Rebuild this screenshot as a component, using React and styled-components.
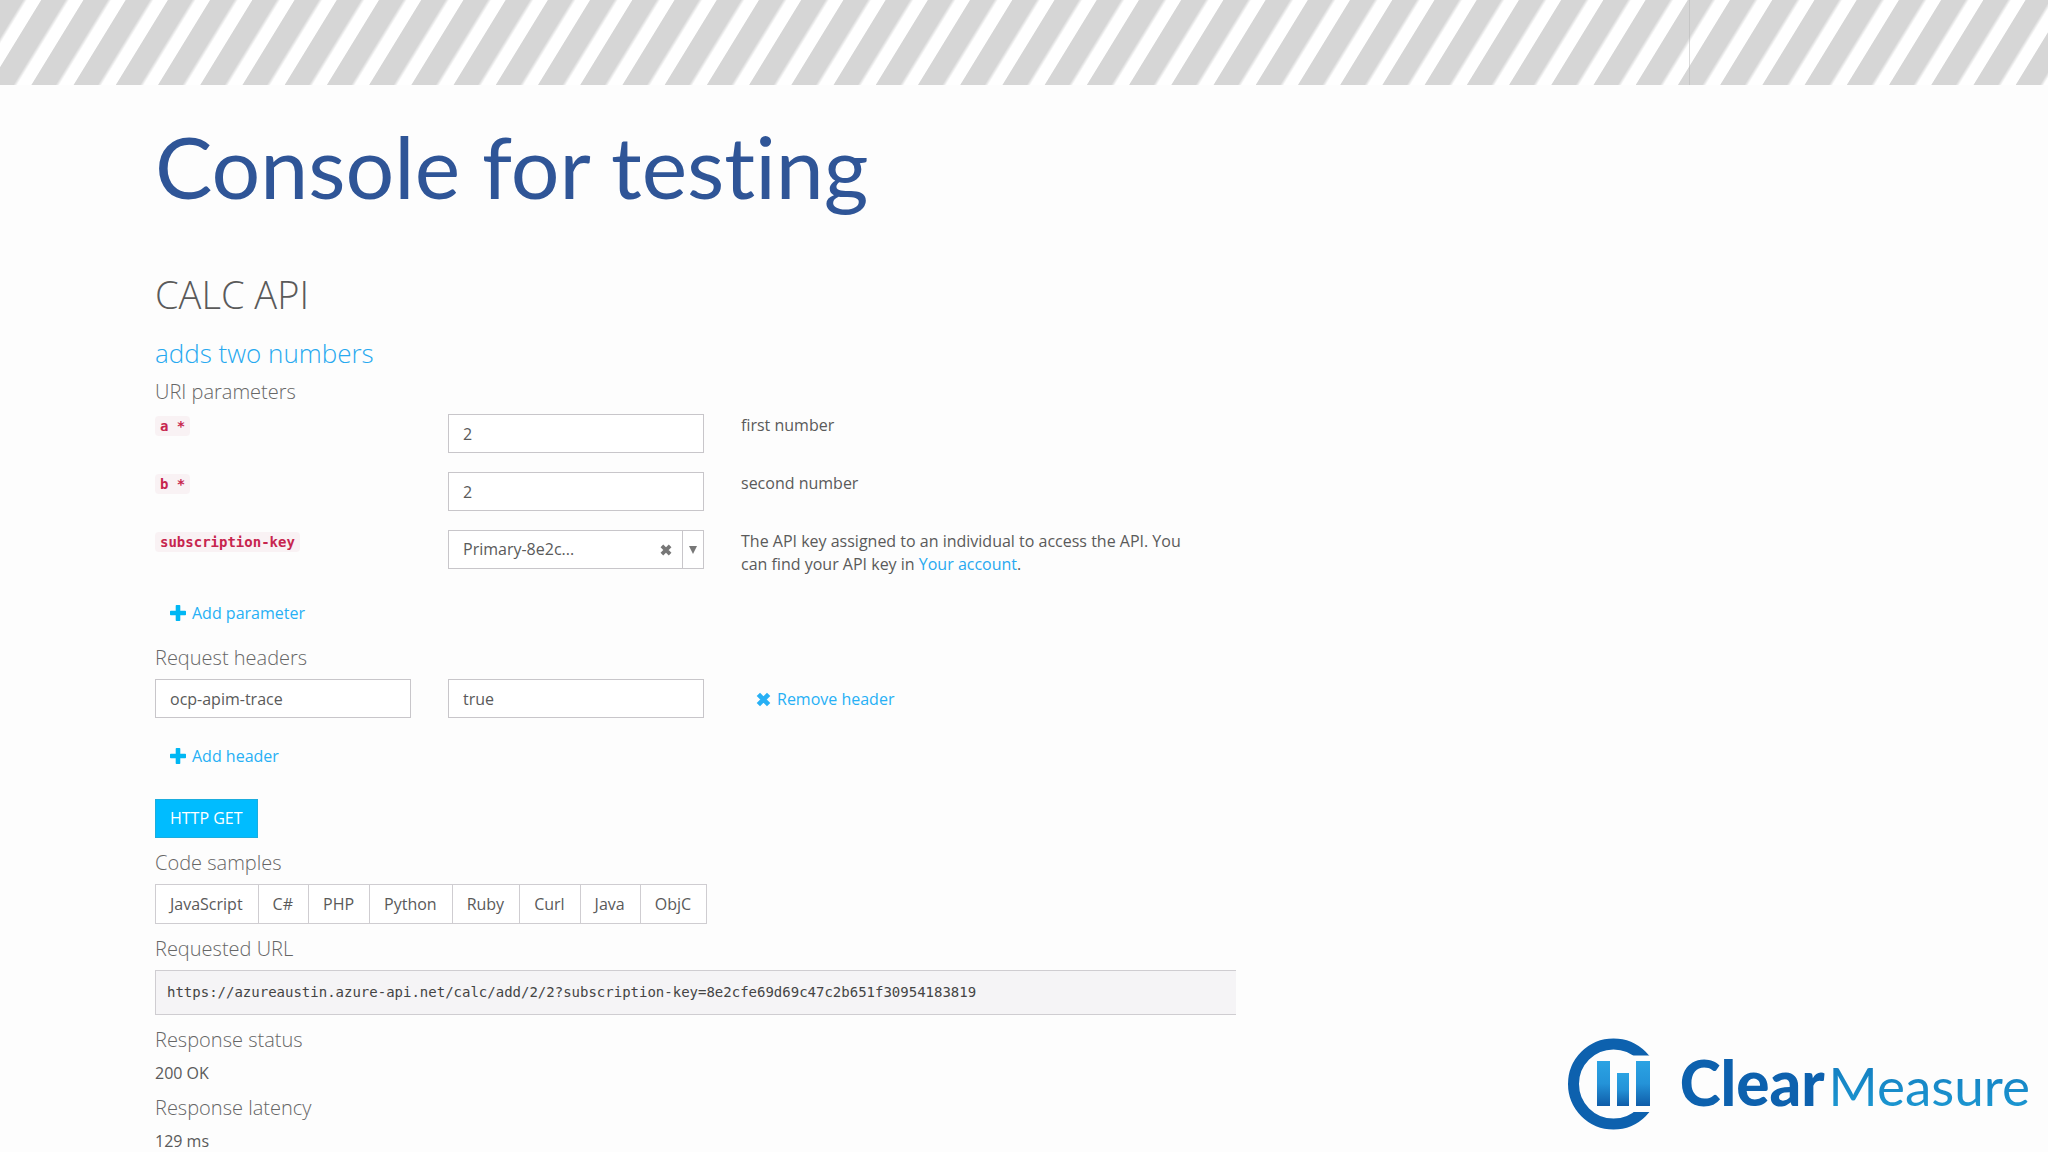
import { useState } from "react";
import styled, { createGlobalStyle } from "styled-components";

const GlobalStyle = createGlobalStyle`
   * {
      box-sizing: border-box;
   }
   body {
      margin: 0;
      background-color: #fdfdfd;
      color: #5a5a5a;
      font-family: "Open Sans", "Noto Sans", sans-serif;
      font-size: 16px;
      line-height: 23px;
   }
   button, input, select {
      font: inherit;
      color: inherit;
      margin: 0;
   }
`;

const Slide = styled.div`
   height: 100vh;
   display: flex;
   flex-direction: column;
   overflow: hidden;
`;

const Banner = styled.svg`
   display: block;
   flex: none;
   width: 100%;
   height: 85px;
`;

const Body = styled.div`
   flex: 1;
   min-height: 0;
   display: flex;
   justify-content: space-between;
   padding: 31px 18px 0 155px;
`;

const Main = styled.main`
   flex: 0 1 1081px;
   min-width: 0;
`;

const Title = styled.h1`
   margin: 0 0 52px;
   color: #2f5597;
   font-family: Lato, sans-serif;
   font-size: 86px;
   font-weight: 400;
   font-variant-ligatures: none;
   line-height: 100px;
   white-space: nowrap;
`;

const ApiName = styled.h2`
   margin: 0 0 14px;
   font-size: 38px;
   font-weight: 300;
   line-height: 52px;
`;

const Operation = styled.h3`
   margin: 0 0 6px;
   color: #27a9f0;
   font-size: 26px;
   font-weight: 300;
   line-height: 38px;
`;

const Heading = styled.h4`
   margin: 11px 0 7px;
   color: #666;
   font-size: 20px;
   font-weight: 300;
   line-height: 28px;

   ${Operation} + & {
      margin: 0 0 8px;
   }
`;

const ParamList = styled.div`
   display: flex;
   flex-direction: column;
   gap: 19px;
   margin-bottom: 17px;
`;

const Row = styled.div`
   display: grid;
   grid-template-columns: 256px 256px 1fr;
   column-gap: 37px;
   align-items: start;
`;

const HeaderRow = styled(Row)`
   margin-bottom: 17px;
`;

const Code = styled.code`
   padding: 2px 5px;
   border-radius: 4px;
   background-color: #f9f2f4;
   color: #c7254e;
   font-family: "DejaVu Sans Mono", monospace;
   font-size: 14px;
   font-weight: 700;
   white-space: pre;
`;

const Input = styled.input`
   width: 100%;
   height: 39px;
   padding: 0 14px;
   border: 1px solid #c8c6ca;
   border-radius: 0;
   background-color: #fff;
`;

const SelectBox = styled.div`
   display: flex;
   height: 39px;
   border: 1px solid #c8c6ca;
   background-color: #fff;
`;

const Select = styled.select`
   flex: 1;
   min-width: 0;
   padding: 0 14px;
   border: 0;
   background: none;
   appearance: none;
`;

const ClearBtn = styled.button`
   display: flex;
   align-items: center;
   padding: 0 10px;
   border: 0;
   background: none;
   color: #777;
`;

const Arrow = styled.span`
   display: flex;
   align-items: center;
   padding: 0 6px;
   border-left: 1px solid #c8c6ca;
   color: #777;
`;

const Description = styled.p`
   margin: 0;
   max-width: 460px;
`;

const Link = styled.a`
   color: #27a9f0;
   text-decoration: none;
`;

const LinkBtn = styled.button`
   display: flex;
   align-items: center;
   gap: 6px;
   height: 40px;
   padding: 0 15px;
   border: 0;
   background: none;
   color: #27b0f5;
`;

const SendBtn = styled.button`
   display: block;
   height: 39px;
   margin-top: 23px;
   padding: 0 14px;
   border: 1px solid #1badde;
   background-color: #00bcff;
   color: #fff;
`;

const Tabs = styled.div`
   display: flex;
   width: max-content;
   border: 1px solid #cfcdd1;
   background-color: #fff;
`;

const Tab = styled.button`
   height: 38px;
   padding: 0 15px 0 14px;
   border: 0;
   background: none;

   & + & {
      border-left: 1px solid #cfcdd1;
   }
`;

const Url = styled.pre`
   margin: 0;
   padding: 11px;
   border: 1px solid #cfcdd1;
   border-right: 0;
   background-color: #f5f4f6;
   color: #444;
   font-family: "DejaVu Sans Mono", monospace;
   font-size: 14px;
   line-height: 21px;
   overflow: hidden;
`;

const Value = styled.p`
   margin: 9px 0 0;
   line-height: 20px;
`;

const Brand = styled.div`
   flex: none;
   align-self: flex-end;
   display: flex;
   align-items: center;
   margin-bottom: 22px;
`;

const BrandMark = styled.svg`
   width: 84px;
   height: 92px;
   margin-right: 28px;
`;

const BrandName = styled.span`
   color: #0d61ae;
   font-family: Lato, sans-serif;
   font-size: 62px;
   font-weight: 900;
   line-height: 64px;
`;

const BrandSuffix = styled.span`
   margin-left: 4px;
   background: linear-gradient(#1279bd, #1d9bd4);
   background-clip: text;
   color: transparent;
   font-size: 53px;
   font-weight: 400;
`;

const samples = ["JavaScript", "C#", "PHP", "Python", "Ruby", "Curl", "Java", "ObjC"];

function Stripes() {
   return (
      <Banner aria-hidden="true">
         <defs>
            <linearGradient id="edge">
               <stop offset="0" stopColor="#d6d6d6" />
               <stop offset="0.86" stopColor="#d6d6d6" />
               <stop offset="1" stopColor="#fdfdfd" />
            </linearGradient>
            <pattern
               id="stripes"
               x="41.2"
               width="42.22"
               height="200"
               patternUnits="userSpaceOnUse"
               patternTransform="skewX(-31.5)"
            >
               <rect width="28" height="200" fill="url(#edge)" />
            </pattern>
         </defs>
         <rect width="100%" height="85" fill="#fff" />
         <rect width="100%" height="85" fill="url(#stripes)" />
         <rect x="1689" width="1" height="85" fill="#b5b5b5" opacity="0.5" />
      </Banner>
   );
}

function PlusIcon() {
   return (
      <svg width="16" height="16" viewBox="0 0 16 16" aria-hidden="true">
         <path
            d="M6.5 0h3q.8 0 .8.8v4.9h4.9q.8 0 .8.8v3q0 .8-.8.8h-4.9v4.9q0 .8-.8.8h-3q-.8 0-.8-.8v-4.9H.8q-.8 0-.8-.8v-3q0-.8.8-.8h4.9V.8q0-.8.8-.8z"
            fill="#00b7f4"
         />
      </svg>
   );
}

function CrossIcon({ size }) {
   return (
      <svg width={size} height={size} viewBox="0 0 14 14" aria-hidden="true">
         <path d="M2.2 2.2l9.6 9.6M11.8 2.2l-9.6 9.6" stroke="currentColor" strokeWidth="4.4" />
      </svg>
   );
}

function Logo() {
   return (
      <Brand>
         <BrandMark viewBox="0 0 84 92" aria-hidden="true">
            <defs>
               <linearGradient id="bar" x2="0" y2="1">
                  <stop offset="0" stopColor="#2ba3e3" />
                  <stop offset="0.5" stopColor="#2493d8" />
                  <stop offset="1" stopColor="#0f5ca8" />
               </linearGradient>
               <clipPath id="opening">
                  <path d="M0 0h84v17.5H64L46 46l18 28h20v18H0z" />
               </clipPath>
            </defs>
            <circle
               cx="45.5"
               cy="46"
               r="40"
               fill="none"
               stroke="#0d61ae"
               strokeWidth="11"
               clipPath="url(#opening)"
            />
            <rect x="29" y="23" width="13" height="45" fill="url(#bar)" />
            <rect x="49" y="35" width="12" height="33" fill="url(#bar)" />
            <rect x="68" y="23" width="14" height="45" fill="url(#bar)" />
         </BrandMark>
         <BrandName>
            Clear<BrandSuffix>Measure</BrandSuffix>
         </BrandName>
      </Brand>
   );
}

export default function App() {
   const [params, setParams] = useState({ a: "2", b: "2" });
   const [header, setHeader] = useState({ name: "ocp-apim-trace", value: "true" });

   function onChangeParam(e) {
      setParams({ ...params, [e.target.id]: e.target.value });
   }

   function onChangeHeader(e) {
      setHeader({ ...header, [e.target.name]: e.target.value });
   }

   return (
      <>
         <GlobalStyle />
         <Slide>
            <Stripes />
            <Body>
               <Main>
                  <Title>Console for testing</Title>
                  <ApiName>CALC API</ApiName>
                  <Operation>adds two numbers</Operation>
                  <Heading>URI parameters</Heading>
                  <ParamList>
                     <Row>
                        <label htmlFor="a">
                           <Code>a *</Code>
                        </label>
                        <Input id="a" value={params.a} onChange={onChangeParam} />
                        <Description>first number</Description>
                     </Row>
                     <Row>
                        <label htmlFor="b">
                           <Code>b *</Code>
                        </label>
                        <Input id="b" value={params.b} onChange={onChangeParam} />
                        <Description>second number</Description>
                     </Row>
                     <Row>
                        <label htmlFor="key">
                           <Code>subscription-key</Code>
                        </label>
                        <SelectBox>
                           <Select id="key">
                              <option>Primary-8e2c...</option>
                           </Select>
                           <ClearBtn type="button" aria-label="Clear">
                              <CrossIcon size={12} />
                           </ClearBtn>
                           <Arrow>
                              <svg width="8" height="8" viewBox="0 0 8 8" aria-hidden="true">
                                 <path d="M0 0h8L4 8z" fill="currentColor" />
                              </svg>
                           </Arrow>
                        </SelectBox>
                        <Description>
                           The API key assigned to an individual to access the API. You can find your API key in{" "}
                           <Link href="#account">Your account</Link>.
                        </Description>
                     </Row>
                  </ParamList>
                  <LinkBtn type="button">
                     <PlusIcon />
                     Add parameter
                  </LinkBtn>
                  <Heading>Request headers</Heading>
                  <HeaderRow>
                     <Input name="name" aria-label="Header name" value={header.name} onChange={onChangeHeader} />
                     <Input name="value" aria-label="Header value" value={header.value} onChange={onChangeHeader} />
                     <LinkBtn type="button">
                        <CrossIcon size={15} />
                        Remove header
                     </LinkBtn>
                  </HeaderRow>
                  <LinkBtn type="button">
                     <PlusIcon />
                     Add header
                  </LinkBtn>
                  <SendBtn type="button">HTTP GET</SendBtn>
                  <Heading>Code samples</Heading>
                  <Tabs>
                     {samples.map((name) => (
                        <Tab key={name} type="button">
                           {name}
                        </Tab>
                     ))}
                  </Tabs>
                  <Heading>Requested URL</Heading>
                  <Url>
                     https://azureaustin.azure-api.net/calc/add/2/2?subscription-key=8e2cfe69d69c47c2b651f30954183819
                  </Url>
                  <Heading>Response status</Heading>
                  <Value>200 OK</Value>
                  <Heading>Response latency</Heading>
                  <Value>129 ms</Value>
               </Main>
               <Logo />
            </Body>
         </Slide>
      </>
   );
}
